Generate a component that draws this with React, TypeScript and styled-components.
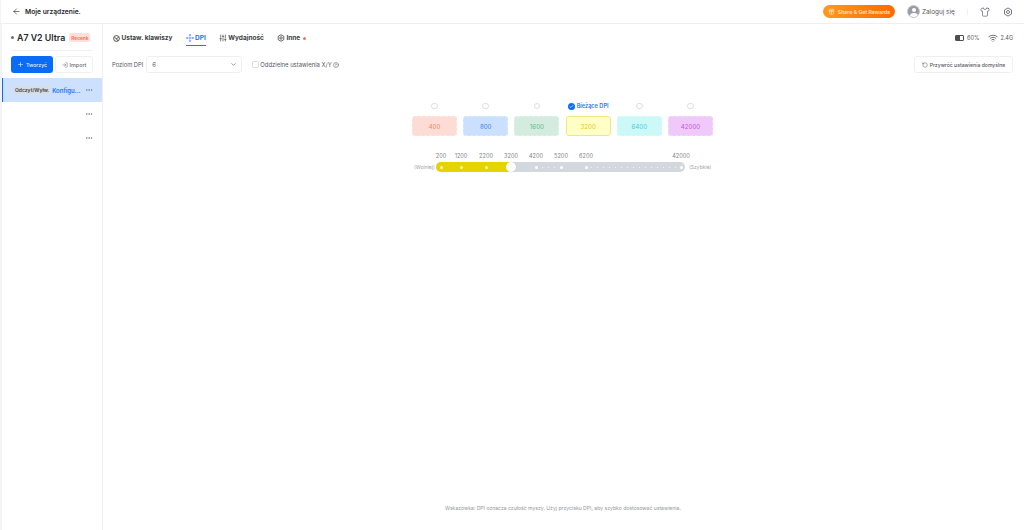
import React from "react";
import styled, { createGlobalStyle } from "styled-components";
import { ArrowLeft, Plus, ChevronDown, RotateCcw, Wifi, Shirt, Gift, Check, Ellipsis, SlidersVertical, HelpCircle, LogIn } from "lucide-react";

const Global = createGlobalStyle`
  html, body { margin: 0; padding: 0; background: #fff; }
  body { font-family: Inter, "Noto Sans", "Liberation Sans", sans-serif; color: #1f2329; overflow: hidden; }
  * { box-sizing: border-box; }
`;
const Page = styled.div`width: 1024px; height: 530px; display: flex; flex-direction: column; background: #fff; overflow: hidden;`;
const Header = styled.header`height: 24px; flex: none; display: flex; align-items: center; padding: 0 11px 0 11px; border-bottom: 1px solid #eeeff1; border-left: 1px solid #f3f3f4;`;
const Back = styled.span`display: flex; margin-right: 4px;`;
const Title = styled.span`font-size: 6.7px; font-weight: 600; color: #24272b; flex: 1;`;
const Reward = styled.div`width: 72px; height: 13px; margin-right: 12px; border-radius: 7px; background: linear-gradient(90deg,#ff9a1e,#ff6a00); color: #ffe4c8; display: flex; align-items: center; justify-content: center; gap: 3px; font-size: 5.2px; font-weight: 600;`;
const Avatar = styled.div`width: 13px; height: 13px; border-radius: 50%; background: #9a9ca3; border: 1px solid #c7c8cc; position: relative; overflow: hidden; margin-right: 2px;
  &::before { content: ""; position: absolute; left: 3.5px; top: 2px; width: 4px; height: 4px; background: #fff; border-radius: 50%; }
  &::after { content: ""; position: absolute; left: 1.5px; top: 7px; width: 8px; height: 6px; background: #fff; border-radius: 50%; }`;
const Login = styled.span`font-size: 6.4px; color: #55585e; width: 45px;`;
const VSep = styled.span`width: 1px; height: 6px; background: #eeeff1; margin-right: 12px;`;
const HeaderIcon = styled.span<{ $gap?: number }>`display: flex; color: #4a4d52; margin-left: ${p => p.$gap ?? 0}px;`;
const Body = styled.div`flex: 1; display: flex; min-height: 0;`;
const Side = styled.aside`width: 103px; flex: none; border-left: 2px solid #f3f3f4; border-right: 1px solid #eeeff1; display: flex; flex-direction: column;`;
const DeviceRow = styled.div`height: 27px; margin: 0 9px; display: flex; align-items: center; border-bottom: 1px solid #f1f1f3; padding-top: 1px;`;
const Dot = styled.span`width: 3px; height: 3px; border-radius: 50%; background: #5f7480; margin-right: 3px; flex: none;`;
const DeviceName = styled.span`font-size: 8.8px; font-weight: 600; color: #26292d; margin-right: 4px; white-space: nowrap;`;
const Badge = styled.span`height: 9px; padding: 0 2px; border-radius: 2px; background: #ffe1da; color: #f66e4e; font-size: 4.8px; font-weight: 600; display: flex; align-items: center;`;
const SideButtons = styled.div`display: flex; gap: 2px; margin: 5px 9px 0;`;
const Create = styled.button`width: 42px; height: 17px; border: 0; border-radius: 3px; background: #0a6cf5; color: #e6f0ff; font: 500 5.2px Inter, sans-serif; display: flex; align-items: center; justify-content: center; gap: 2px; padding: 0;`;
const ImportBtn = styled.button`width: 38px; height: 17px; border: 1px solid #eeeff1; border-radius: 3px; background: #fff; color: #6a6d72; font: 500 5.4px Inter, sans-serif; display: flex; align-items: center; justify-content: center; gap: 2px; padding: 0;`;
const Row = styled.div<{ $active?: boolean }>`height: 24px; display: flex; align-items: center; padding: 0 9px 0 ${p => p.$active ? 11 : 12}px; background: ${p => p.$active ? "#cde1ff" : "transparent"}; border-left: ${p => p.$active ? "1px solid #0a6cf5" : "0"}; color: #73767c;`;
const RowList = styled.div`margin-top: 5px;`;
const Tag = styled.span`background: #d9dde3; color: #3d4046; font-size: 5px; font-weight: 600; padding: 1px; border-radius: 1px; white-space: nowrap; margin-right: 2px;`;
const RowName = styled.span`color: #2277f6; font-size: 6px; font-weight: 600; flex: 1; white-space: nowrap;`;
const RowSpacer = styled.span`flex: 1;`;
const Main = styled.main`flex: 1; min-width: 0; display: flex; flex-direction: column; padding: 0 11px 0 10px;`;
const TabBar = styled.div`height: 27px; flex: none; display: flex; align-items: center; justify-content: space-between; padding-top: 1px;`;
const Tabs = styled.nav`display: flex; gap: 13px;`;
const Tab = styled.span<{ $active?: boolean }>`display: flex; align-items: center; gap: 1.5px; height: 13px; font-size: 6.5px; font-weight: 700; color: ${p => p.$active ? "#2277f6" : "#3a3d42"}; box-shadow: ${p => p.$active ? "0 1px 0 #2277f6" : "none"};`;
const Red = styled.span`width: 3px; height: 3px; border-radius: 50%; background: #f6734f; margin-left: 1px;`;
const Status = styled.div`display: flex; align-items: center; gap: 2px; font-size: 5.5px; color: #55585e;`;
const Battery = styled.span`width: 9px; height: 6px; border: 1px solid #4c4f54; border-radius: 1px; margin-right: 1px; display: flex;
  &::before { content: ""; width: 4px; background: #4c4f54; }`;
const Controls = styled.div`display: flex; align-items: center; margin-top: 5px; height: 17px; flex: none;`;
const Label = styled.span`font-size: 5.8px; color: #55585e; margin-right: 3px; margin-left: -1px;`;
const Select = styled.div`width: 96px; height: 17px; border: 1px solid #eeeff1; border-radius: 3px; display: flex; align-items: center; justify-content: space-between; padding: 0 4px 0 5px; font-size: 6px; color: #55585e;`;
const Check2 = styled.span`width: 7px; height: 7px; border: 1px solid #d8dade; border-radius: 1.5px; margin-left: 10px; margin-right: 1px;`;
const Opt = styled.span`font-size: 5.9px; color: #55585e; margin-right: 1px;`;
const Reset = styled.button`margin-left: auto; width: 99px; height: 17px; border: 1px solid #eeeff1; border-radius: 3px; background: #fff; font: 500 5.1px Inter, sans-serif; color: #55585e; display: flex; align-items: center; justify-content: center; gap: 2px; padding: 0;`;
const Center = styled.div`flex: 1; display: flex; flex-direction: column; align-items: center; padding-top: 29px;`;
const Levels = styled.div`display: flex; gap: 6.2px; margin-right: 1px;`;
const Level = styled.div`width: 45px; display: flex; flex-direction: column; align-items: center; gap: 6px;`;
const RadioWrap = styled.div`height: 8px; display: flex; align-items: center; gap: 2px; white-space: nowrap; font-size: 5.6px; font-weight: 600; color: #2277f6;`;
const Radio = styled.span`width: 6.5px; height: 6.5px; border-radius: 50%; border: 1px solid #dcdee2;`;
const Current = styled.span`width: 7px; height: 7px; border-radius: 50%; background: #0a6cf5; color: #fff; display: flex; align-items: center; justify-content: center;`;
const Card = styled.div<{ $bg: string; $c: string; $on?: boolean; $b?: string }>`width: 100%; height: 20px; border-radius: 3px; background: ${p => p.$bg}; color: ${p => p.$c}; border: 1px ${p => p.$on ? "solid" : "dashed"} ${p => p.$on ? p.$b : "#ffffff55"}; font-size: 6.2px; display: flex; align-items: center; justify-content: center;`;
const SliderArea = styled.div`width: 300px; margin: 17px 4px 0 0; position: relative; height: 20px;`;
const Scale = styled.span`position: absolute; top: 0; transform: translateX(-50%); font-size: 5.6px; color: #808389;`;
const Side2 = styled.span`position: absolute; top: 10px; font-size: 5px; color: #a0a3a8; line-height: 9px;`;
const Track = styled.div`position: absolute; left: 25px; top: 9px; width: 249px; height: 10px; border-radius: 5px; background: #d3d8de; overflow: hidden;`;
const Fill = styled.div`height: 100%; background: #e6d300;`;
const Tick = styled.span<{ $big?: boolean; $on?: boolean }>`position: absolute; top: ${p => p.$big ? 12.5 : 13.5}px; width: ${p => p.$big ? 3 : 1}px; height: ${p => p.$big ? 3 : 1}px; border-radius: 50%; background: ${p => p.$on ? "#fff7b0" : "#fff"};`;
const Thumb = styled.span`position: absolute; left: 95px; top: 9px; width: 10px; height: 10px; border-radius: 50%; background: #fff; box-shadow: 0 0 1px #bbb;`;
const Hint = styled.div`flex: none; text-align: center; font-size: 5.1px; color: #94979c; padding: 0 0 19px 0;`;

const levels: { v: string; bg: string; c: string; on?: boolean; b?: string }[] = [
  { v: "400", bg: "#fddcd6", c: "#f6875f" }, { v: "800", bg: "#cbe0ff", c: "#3f80ee" },
  { v: "1600", bg: "#d4ecdf", c: "#5fbb8a" }, { v: "3200", bg: "#ffffc8", c: "#e0ca12", on: true, b: "#f0e77d" },
  { v: "6400", bg: "#ccf8f8", c: "#45cfe0" }, { v: "42000", bg: "#efc9f9", c: "#c654ea" },
];
const scale = [[30, "200"], [50, "1200"], [75, "2200"], [100, "3200"], [125, "4200"], [150, "5200"], [175, "6200"], [270, "42000"]] as const;
const big = [30, 50, 75, 125, 150, 175, 270];
const small = [180, 186, 192, 198, 204, 210, 216, 222, 228, 234, 240, 246, 252, 258, 264, 131, 137, 143];

const KeysIcon = () => (
  <svg width="7" height="7" viewBox="0 0 14 14" fill="none" stroke="currentColor" strokeWidth="1.8">
    <circle cx="7" cy="7" r="5.8" /><path d="M3 5.5 L7 7 L11 5 M7 7 L9 11.5" />
  </svg>
);
const DpiIcon = () => (
  <svg width="8" height="8" viewBox="0 0 16 16" fill="none" stroke="currentColor" strokeWidth="1.6">
    <path d="M8 1v4M8 11v4M1 8h4M11 8h4M6.5 2.5 8 1l1.5 1.5M6.5 13.5 8 15l1.5-1.5M2.5 6.5 1 8l1.5 1.5M13.5 6.5 15 8l-1.5 1.5" />
    <circle cx="8" cy="8" r="0.8" fill="currentColor" />
  </svg>
);
const MoreIcon = () => (
  <svg width="8" height="8" viewBox="0 0 16 16" fill="none" stroke="currentColor" strokeWidth="1.6">
    <path d="M8 1.5 13.6 4.7v6.6L8 14.5 2.4 11.3V4.7Z" /><circle cx="8" cy="8" r="2.4" />
  </svg>
);
const GearIcon = () => (
  <svg width="10" height="10" viewBox="0 0 16 16" fill="none" stroke="currentColor" strokeWidth="1.2">
    <path d="M8 1.5 13.6 4.7v6.6L8 14.5 2.4 11.3V4.7Z" /><circle cx="8" cy="8" r="2.4" />
  </svg>
);

export default function App() {
  return (
    <Page>
      <Global />
      <Header>
        <Back><ArrowLeft size={9} strokeWidth={1.6} /></Back>
        <Title>Moje urządzenie.</Title>
        <Reward><Gift size={7} />Share &amp; Get Rewards</Reward>
        <Avatar />
        <Login>Zaloguj się</Login>
        <VSep />
        <HeaderIcon><Shirt size={10} strokeWidth={1.5} /></HeaderIcon>
        <HeaderIcon $gap={13}><GearIcon /></HeaderIcon>
      </Header>
      <Body>
        <Side>
          <DeviceRow><Dot /><DeviceName>A7 V2 Ultra</DeviceName><Badge>Recenk</Badge></DeviceRow>
          <SideButtons>
            <Create><Plus size={7} />Tworzyć</Create>
            <ImportBtn><LogIn size={6} />Import</ImportBtn>
          </SideButtons>
          <RowList>
            <Row $active><Tag>Odczyt/Wyłw.</Tag><RowName>Konfigu...</RowName><Ellipsis size={8} /></Row>
            <Row><RowSpacer /><Ellipsis size={8} /></Row>
            <Row><RowSpacer /><Ellipsis size={8} /></Row>
          </RowList>
        </Side>
        <Main>
          <TabBar>
            <Tabs>
              <Tab><KeysIcon />Ustaw. klawiszy</Tab>
              <Tab $active><DpiIcon />DPI</Tab>
              <Tab><SlidersVertical size={8} strokeWidth={2} />Wydajność</Tab>
              <Tab><MoreIcon />Inne<Red /></Tab>
            </Tabs>
            <Status><Battery />60%<Wifi size={10} style={{ marginLeft: 7 }} />2.4G</Status>
          </TabBar>
          <Controls>
            <Label>Poziom DPI</Label>
            <Select>6<ChevronDown size={7} /></Select>
            <Check2 />
            <Opt>Oddzielne ustawienia X/Y</Opt>
            <HelpCircle size={6} color="#55585e" />
            <Reset><RotateCcw size={6} />Przywróć ustawienia domyślne</Reset>
          </Controls>
          <Center>
            <Levels>
              {levels.map(l => (
                <Level key={l.v}>
                  <RadioWrap>
                    {l.on ? <><Current><Check size={5} strokeWidth={3} /></Current>Bieżące DPI</> : <Radio />}
                  </RadioWrap>
                  <Card $bg={l.bg} $c={l.c} $on={l.on} $b={l.b}>{l.v}</Card>
                </Level>
              ))}
            </Levels>
            <SliderArea>
              {scale.map(([x, t]) => <Scale key={t} style={{ left: x }}>{t}</Scale>)}
              <Side2 style={{ left: 3 }}>(Wolniej)</Side2>
              <Track><Fill style={{ width: 75 }} /></Track>
              {big.map(x => <Tick key={x} $big $on={x < 100} style={{ left: x - 1.5 }} />)}
              {small.map(x => <Tick key={x} style={{ left: x }} />)}
              <Thumb />
              <Side2 style={{ left: 278 }}>(Szybkie)</Side2>
            </SliderArea>
          </Center>
          <Hint>Wskazówka: DPI oznacza czułość myszy. Użyj przycisku DPI, aby szybko dostosować ustawienia.</Hint>
        </Main>
      </Body>
    </Page>
  );
}
